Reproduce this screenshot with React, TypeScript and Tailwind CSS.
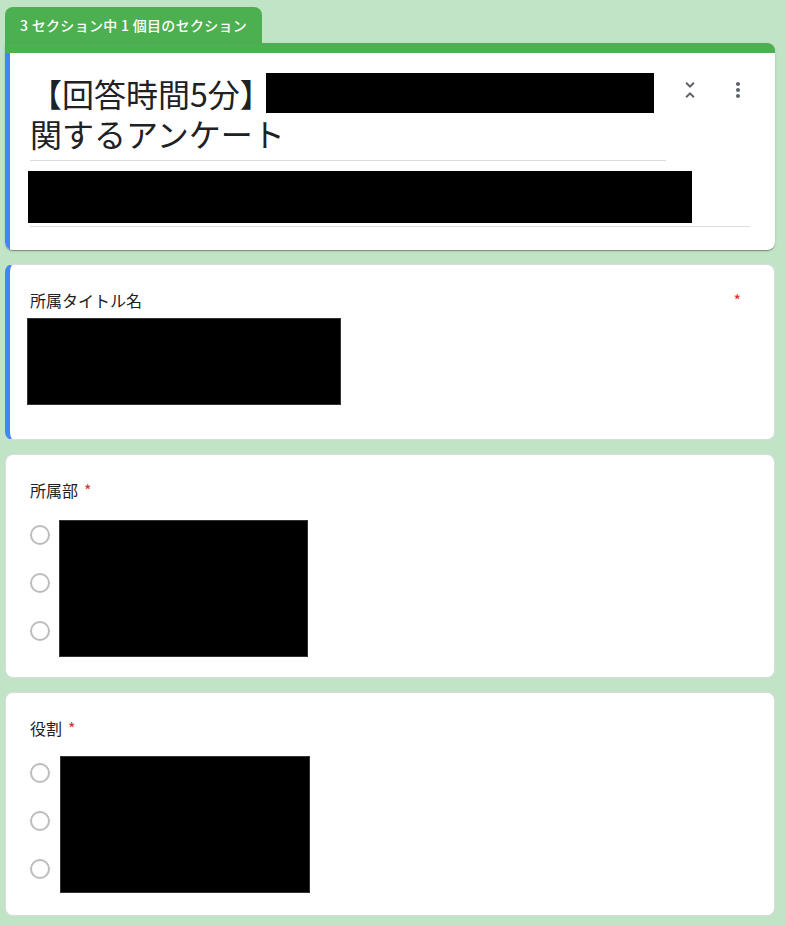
import React from "react";

const font = "font-['Noto_Sans_CJK_JP','Noto_Sans',sans-serif]";

function Radio() {
  return (
    <div className="h-[48px] flex items-center">
      <div className="w-[20px] h-[20px] rounded-full border-2 border-[#bdbdbd]" />
    </div>
  );
}

function ChoiceCard({ label, boxTop, boxLeft, boxWidth }: { label: string; boxTop: string; boxLeft: string; boxWidth: string }) {
  return (
    <div className="mt-[14px] bg-white rounded-lg border border-[#dadce0] pl-[24px] pr-[24px] pt-[23px] pb-[22px]">
      <div className="text-[16px] leading-[24px] text-[#202124]">
        {label}
        <span className="ml-[6px] text-[#d93025]">*</span>
      </div>
      <div className="mt-[9px] flex items-start">
        <div className="flex flex-col">
          <Radio />
          <Radio />
          <Radio />
        </div>
        <div className={`${boxTop} ${boxLeft} ${boxWidth} h-[137px] mb-[-2px] bg-black border border-[#333]`} />
      </div>
    </div>
  );
}

export default function App() {
  return (
    <div className={`min-h-screen bg-[#c1e4c6] pt-[7px] pl-[5px] pr-[10px] pb-4 ${font}`}>
      {/* Section tab */}
      <div className="w-[257px] h-[36px] rounded-t-lg bg-[#4caf50] flex items-center pl-[15px] text-[14px] font-medium tracking-[0.3px] text-white">
        3 セクション中 1 個目のセクション
      </div>

      {/* Header card */}
      <div className="bg-white rounded-tr-lg rounded-b-lg border-t-[10px] border-[#4caf50] overflow-hidden shadow-[0_2px_1px_-1px_rgba(0,0,0,0.2),0_1px_1px_0_rgba(0,0,0,0.14),0_1px_3px_0_rgba(0,0,0,0.12)]">
        <div className="border-l-[5px] border-[#4285f4] pl-[20px] pr-[25px] pb-[23px]">
          <div className="flex items-start pt-[13px] mr-[-12px]">
            <div className="flex-1 pt-[7px] pb-[7px] border-b border-[#dadce0] text-[32px] leading-[40px] text-[#202124]">
              【回答時間5分】
              <span className="inline-block align-top ml-[-6px] w-[388px] h-[40px] bg-black" />
              <br />
              関するアンケート
            </div>
            <div className="flex text-[#5f6368]">
              <div className="w-[48px] h-[48px] flex items-center justify-center">
                <svg width="24" height="24" viewBox="0 0 24 24" fill="currentColor">
                  <path d="M7.41 18.59L8.83 20 12 16.83 15.17 20l1.41-1.41L12 14l-4.59 4.59zm9.18-13.18L15.17 4 12 7.17 8.83 4 7.41 5.41 12 10l4.59-4.59z" />
                </svg>
              </div>
              <div className="w-[48px] h-[48px] flex items-center justify-center">
                <svg width="24" height="24" viewBox="0 0 24 24" fill="currentColor">
                  <path d="M12 8c1.1 0 2-.9 2-2s-.9-2-2-2-2 .9-2 2 .9 2 2 2zm0 2c-1.1 0-2 .9-2 2s.9 2 2 2 2-.9 2-2-.9-2-2-2zm0 6c-1.1 0-2 .9-2 2s.9 2 2 2 2-.9 2-2-.9-2-2-2z" />
                </svg>
              </div>
            </div>
          </div>
          <div className="mt-[10px] pb-[3px] border-b border-[#dadce0]">
            <div className="ml-[-2px] w-[664px] h-[52px] bg-black" />
          </div>
        </div>
      </div>

      {/* Text question card */}
      <div className="mt-[14px] bg-white rounded-lg border border-[#dadce0] border-l-[5px] border-l-[#4285f4] pl-[20px] pr-[24px] pt-[23px] pb-[34px]">
        <div className="flex justify-between text-[16px] leading-[24px] text-[#202124]">
          <span>所属タイトル名</span>
          <span className="mr-[9px] text-[#d93025]">*</span>
        </div>
        <div className="mt-[6px] ml-[-3px] w-[314px] h-[87px] bg-black border border-[#333]" />
      </div>

      <ChoiceCard label="所属部" boxTop="mt-[9px]" boxLeft="ml-[9px]" boxWidth="w-[249px]" />
      <ChoiceCard label="役割" boxTop="mt-[7px]" boxLeft="ml-[10px]" boxWidth="w-[250px]" />
    </div>
  );
}
